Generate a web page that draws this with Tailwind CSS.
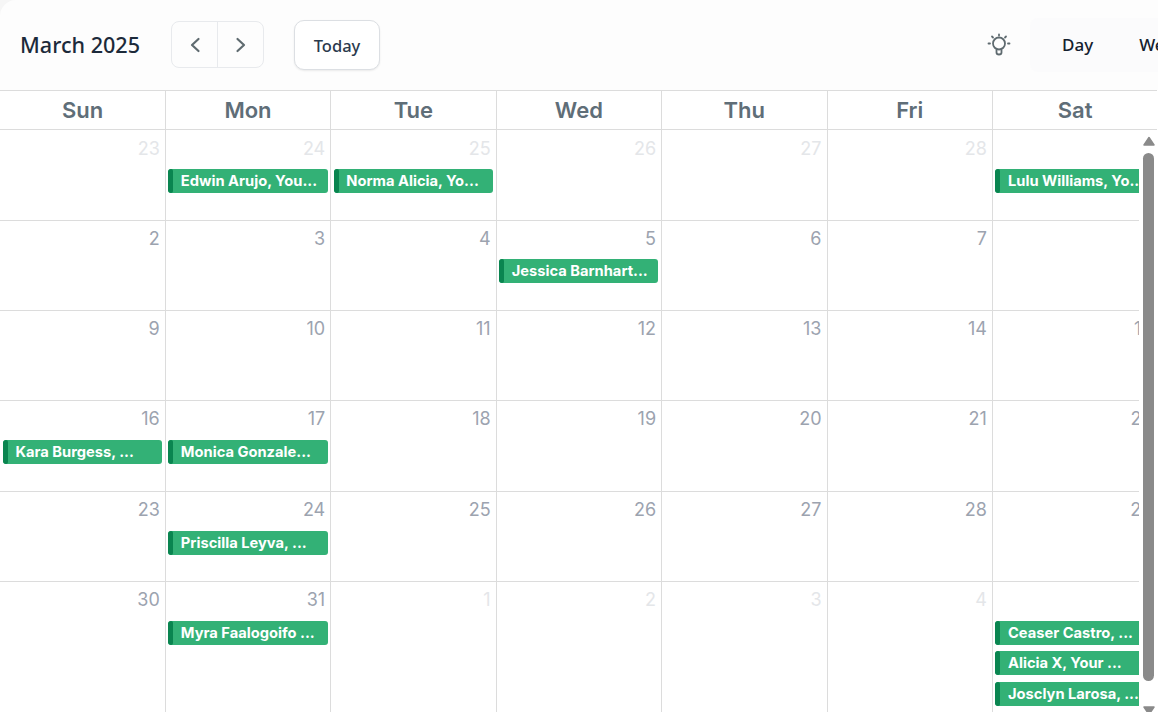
<!DOCTYPE html>
<html lang="en">
<head>
    <meta charset="UTF-8">
    <title>March 2025</title>
    <script src="https://cdn.jsdelivr.net/npm/@tailwindcss/browser@4"></script>
</head>
<body class="bg-white font-['Inter',sans-serif] w-[1158px] h-[712px] overflow-hidden">
    <!-- Toolbar -->
    <div class="bg-[#f6f6f6]">
        <div class="h-[90px] bg-[#fdfdfd] rounded-tl-[16px] flex items-center pl-[20px] font-['Noto_Sans',sans-serif]">
            <h1 class="w-[151px] text-[21.6px] font-medium text-[#1c2a3a]">March 2025</h1>
            <div class="flex w-[93px] h-[47px] -mt-[1px] border border-[#e8eaed] rounded-lg text-[#5f6b70]">
                <button class="w-[46px] flex items-center justify-center border-r border-[#e8eaed]">
                    <svg width="20" height="20" viewBox="0 0 20 20" fill="none" stroke="currentColor" stroke-width="2.2" stroke-linecap="round" stroke-linejoin="round"><path d="M13.500 4L7 10l6.500 6"/></svg>
                </button>
                <button class="flex-1 flex items-center justify-center">
                    <svg width="20" height="20" viewBox="0 0 20 20" fill="none" stroke="currentColor" stroke-width="2.2" stroke-linecap="round" stroke-linejoin="round"><path d="M6.500 4L13 10l-6.500 6"/></svg>
                </button>
            </div>
            <button class="ml-[30px] w-[86px] h-[50px] border border-[#dcdfe3] rounded-[10px] bg-white shadow-[0_1px_2px_rgba(0,0,0,0.08)] text-[16.5px] font-medium text-[#2b3a4d] pt-[2px]">Today</button>
            <div class="ml-auto flex items-center">
                <svg class="mr-[19px] text-[#5f6b70]" width="24" height="24" viewBox="0 0 24 24" fill="none" stroke="currentColor" stroke-width="1.8" stroke-linecap="round"><circle cx="12" cy="10.500" r="6"/><path d="M9.500 17v2.500a2.500 2 0 0 0 5 0V17M12 1.500v1M5 3.500l1 1M19 3.500l-1 1M1.500 10.500h1.500M21 10.500h1.500"/></svg>
                <div class="w-[128px] h-[54px] bg-[#fbfbfc] rounded-l-lg flex items-center pl-[32px] gap-[46px] overflow-hidden text-[17px] font-medium text-[#14202e] whitespace-nowrap">
                    <span>Day</span>
                    <span>Week</span>
                </div>
            </div>
        </div>
    </div>

    <!-- Weekday header -->
    <div class="w-[1158px] -ml-[0.65px] grid grid-cols-7 h-[40px] border-y border-[#dcdcdc] text-[22px] font-semibold text-[#5f6e78]">
        <div class="flex items-center justify-center pt-px border-l border-[#dcdcdc]">Sun</div>
        <div class="flex items-center justify-center pt-px border-l border-[#dcdcdc]">Mon</div>
        <div class="flex items-center justify-center pt-px border-l border-[#dcdcdc]">Tue</div>
        <div class="flex items-center justify-center pt-px border-l border-[#dcdcdc]">Wed</div>
        <div class="flex items-center justify-center pt-px border-l border-[#dcdcdc]">Thu</div>
        <div class="flex items-center justify-center pt-px border-l border-[#dcdcdc]">Fri</div>
        <div class="flex items-center justify-center pt-px border-l border-[#dcdcdc]">Sat</div>
    </div>

    <div class="flex h-[582px]">
        <div class="w-[1139px] overflow-hidden">
            <div id="grid" class="w-[1158px] -ml-[0.65px] mt-[0.2px] grid grid-cols-7 grid-rows-[90.4px_90.4px_90.4px_90.4px_90.4px_140px]"></div>
        </div>
        <!-- Scrollbar -->
        <div class="w-[19px] flex flex-col items-center pt-[6px]">
            <svg width="12" height="10" viewBox="0 0 12 10" class="shrink-0 text-[#8a8a8a]"><path d="M6 1.500L11 9H1z" fill="currentColor" stroke="currentColor" stroke-width="1.500" stroke-linejoin="round" /></svg>
            <div class="w-[11px] h-[528px] mt-[7px] bg-[#8a8a8a] rounded-full shrink-0"></div>
            <svg width="12" height="10" viewBox="0 0 12 10" class="mt-[25px] shrink-0 text-[#8a8a8a]"><path d="M6 8.500L11 1H1z" fill="currentColor" stroke="currentColor" stroke-width="1.500" stroke-linejoin="round" /></svg>
        </div>
    </div>

    <script>
        const days = [
            [23, 1], [24, 1, 'Edwin Arujo, You...'], [25, 1, 'Norma Alicia, Yo...'], [26, 1], [27, 1], [28, 1], [1, 1, 'Lulu Williams, Yo...'],
            [2], [3], [4], [5, 0, 'Jessica Barnhart...'], [6], [7], [8],
            [9], [10], [11], [12], [13], [14], [15],
            [16, 0, 'Kara Burgess, ...'], [17, 0, 'Monica Gonzale...'], [18], [19], [20], [21], [22],
            [23], [24, 0, 'Priscilla Leyva, ...'], [25], [26], [27], [28], [29],
            [30], [31, 0, 'Myra Faalogoifo ...'], [1, 1], [2, 1], [3, 1], [4, 1], [5, 0, 'Ceaser Castro, ...', 'Alicia X, Your ...', 'Josclyn Larosa, ...']
        ];

        const grid = document.getElementById('grid');
        days.forEach(([num, muted, ...events], i) => {
            const cell = document.createElement('div');
            cell.className = 'border-b border-l border-[#dcdcdc] pl-[2.55px]';
            const pills = events.map(name => `
                <div class="w-[159.3px] h-[24px] mb-[6.5px] flex bg-[#33b176] rounded-[3px] overflow-hidden text-white text-[14.7px] font-bold leading-[24px] whitespace-nowrap">
                    <span class="w-[5px] shrink-0 bg-[#0a8550] rounded-[2px]"></span>
                    <span class="pl-[7.5px]">${name}</span>
                </div>`).join('');
            cell.innerHTML = `
                <div class="h-[38.75px] ${i < 7 ? 'pt-[6.4px]' : 'pt-[6.05px]'} pr-[5px] text-right text-[18px] leading-[24px] ${muted ? 'text-[#e4e6e9]' : 'text-[#9ca3af]'}">${num}</div>
                ${pills}`;
            grid.appendChild(cell);
        });
    </script>
</body>
</html>
